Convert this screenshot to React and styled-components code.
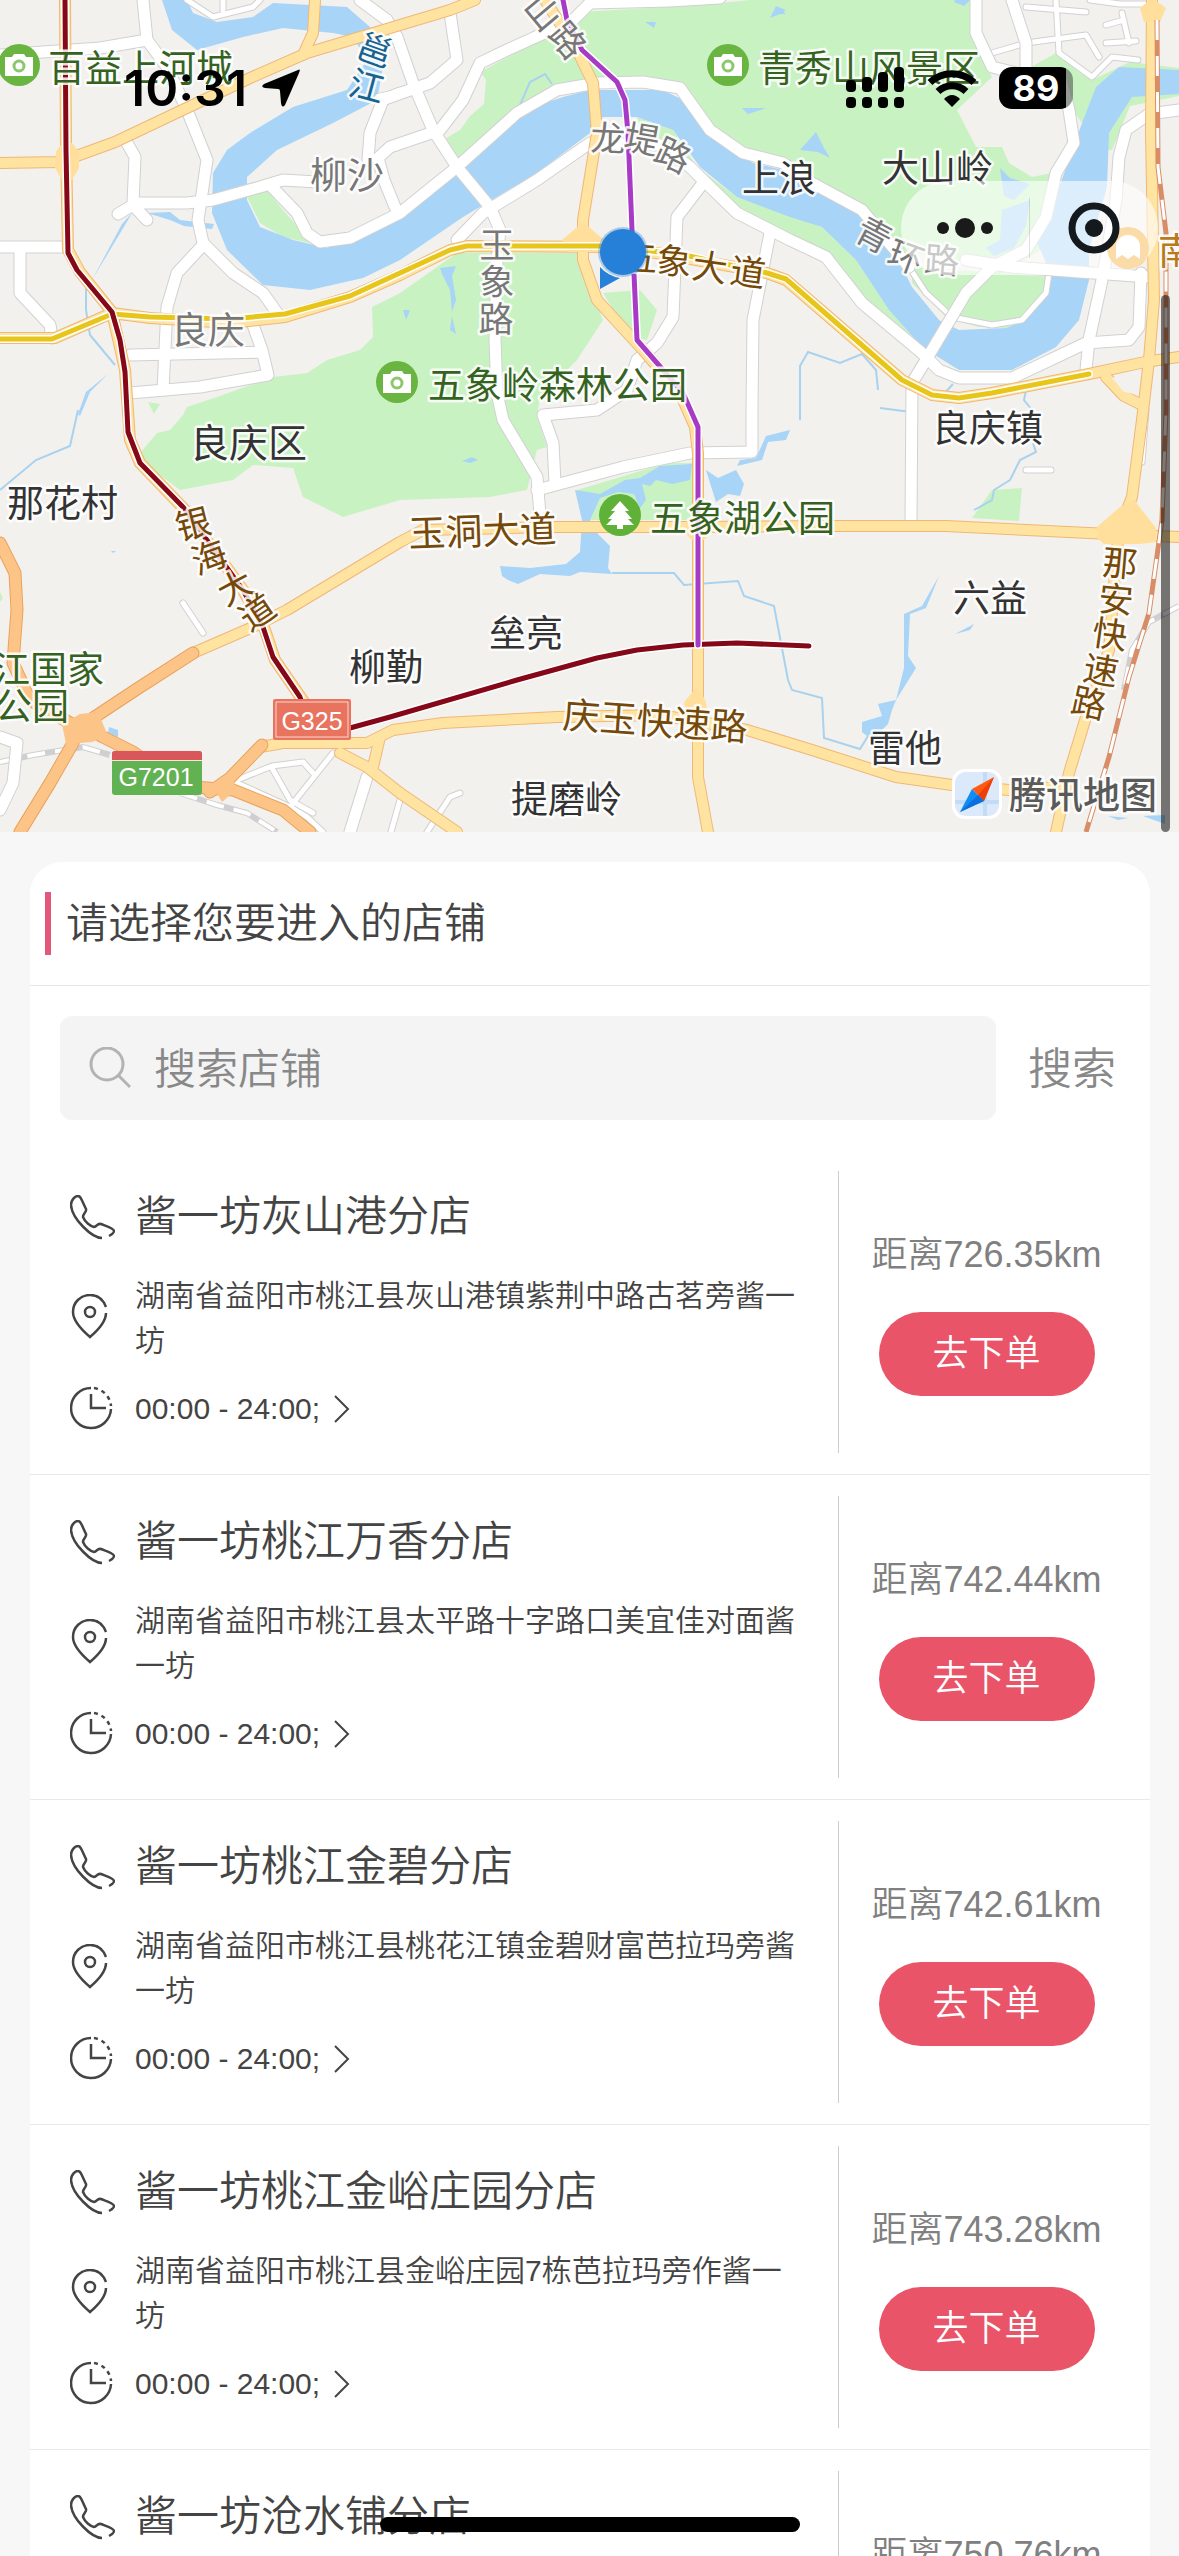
import React, { useState } from 'react';
import styled, { createGlobalStyle } from 'styled-components';

const SANS = '"Liberation Sans", "Noto Sans CJK SC", sans-serif';

const stores = [
  { name: '酱一坊灰山港分店', address: '湖南省益阳市桃江县灰山港镇紫荆中路古茗旁酱一坊', hours: '00:00 - 24:00;', distance: '726.35' },
  { name: '酱一坊桃江万香分店', address: '湖南省益阳市桃江县太平路十字路口美宜佳对面酱一坊', hours: '00:00 - 24:00;', distance: '742.44' },
  { name: '酱一坊桃江金碧分店', address: '湖南省益阳市桃江县桃花江镇金碧财富芭拉玛旁酱一坊', hours: '00:00 - 24:00;', distance: '742.61' },
  { name: '酱一坊桃江金峪庄园分店', address: '湖南省益阳市桃江县金峪庄园7栋芭拉玛旁作酱一坊', hours: '00:00 - 24:00;', distance: '743.28' },
  { name: '酱一坊沧水铺分店', address: '湖南省益阳市赫山区沧水铺镇沧水铺社区芭拉玛旁酱一坊', hours: '00:00 - 24:00;', distance: '750.76' },
];

/* ---------- map data ---------- */

const parks = [
  'M580 12 700 5 750 0 970 0 975 45 992 77 957 110 976 147 1002 147 1009 163 1032 177 1052 173 1040 250 1000 275 960 262 900 250 866 213 812 183 783 163 723 137 683 90 590 80 583 50 547 33Z',
  'M547 33 583 50 590 80 550 87 500 120 457 160 443 140 460 130 470 116 484 104 486 80 480 72 510 56Z',
  'M912 267 1052 277 1049 293 1026 320 1006 328 979 327 946 317 912 283Z',
  'M637 117 673 130 697 167 737 197 790 215 822 227 856 260 889 310 922 347 862 300 822 257 779 230 737 207 690 170 640 130Z',
  'M1026 70 1056 53 1079 72 1092 80 1130 62 1179 68 1179 96 1130 106 1112 150 1106 150 1108 128 1120 100 1082 123 1074 112 1064 84 1026 80Z',
  'M400 293 372 307 373 337 360 350 327 360 307 373 273 377 217 397 187 407 183 415 170 430 157 433 140 453 153 470 180 490 233 480 253 465 293 468 303 497 343 517 400 500 490 497 527 490 537 450 547 447 537 417 540 397 577 360 603 320 590 290 577 253 457 253Z',
  'M603 293 640 290 657 310 647 340 630 337Z',
  'M247 197 267 190 283 210 307 237 327 247 283 237 260 223Z',
  'M577 490 667 463 692 463 693 520 590 520Z',
  'M992 490 1022 488 1019 521 972 518Z',
  'M148 402 160 404 154 414Z',
  'M0 592 3 598 0 602Z',
];

const waters = [
  'M162 0 172 30 197 50 243 37 283 28 333 33 353 37 367 60 347 90 293 107 250 133 227 150 213 173 212 213 227 250 263 285 310 290 363 278 400 260 463 217 537 173 590 133 603 117 637 117 673 130 700 167 737 197 790 217 822 227 856 260 889 310 922 347 959 370 1012 370 1056 347 1079 320 1089 280 1089 250 1107 187 1109 133 1132 97 1179 94 1179 70 1119 67 1096 87 1082 123 1069 160 1059 187 1036 240 1052 277 1049 293 1026 320 1006 328 959 330 939 320 912 287 892 247 859 213 812 187 783 170 753 163 723 143 683 100 663 90 590 90 563 97 533 107 463 167 453 177 390 223 360 233 327 248 293 240 260 227 247 200 247 177 277 150 333 123 377 100 383 67 370 27 347 7 273 3 253 17 217 22 193 13 187 0Z',
  'M575 490 600 494 625 480 640 478 660 466 692 464 690 480 672 484 656 480 650 486 642 484 646 500 640 508 634 494 618 492 600 498 590 520 598 534 610 546 608 568 612 574 580 572 570 576 540 574 518 584 508 580 502 576 500 566 530 568 566 564 580 552 582 520Z',
  'M706 470 718 478 736 470 744 484 740 496 728 494 716 502Z',
  'M737 466 762 460 768 442 786 440 790 430 766 436 756 458 740 460Z',
  'M939 576 922 606 904 614 904 668 896 700 916 668 908 656 910 614 926 608Z',
  'M896 700 878 704 882 716 862 722 862 732 872 740 888 724 892 710Z',
  'M955 634 974 624 970 630Z',
  'M109 727 118 730 118 737 108 733Z',
  'M132 213 128 220 92 280 122 224Z',
  'M147 213 170 212 180 220 214 224 212 229 184 226 170 220Z',
  'M90 335 104 350 98 346Z M108 374 90 392 80 416 78 414 86 392Z',
  'M1002 210 1030 200 1026 226 1014 248 994 256 986 248 1000 240Z',
  'M1000 168 1010 178 1030 184 1014 200 1004 196Z',
  'M1143 816 1165 815 1165 824Z M1108 816 1128 818 1118 820Z',
  'M440 268 456 266 452 276 456 300 452 312 450 290 442 274Z M452 316 456 334 450 330Z M403 310 410 310 406 320Z',
  'M776 6 786 10 780 14 770 18Z M645 22 656 22 654 28Z M742 108 766 108 748 114Z M800 150 816 132 824 148 830 158 818 152Z',
  'M955 0 970 0 964 6 954 2Z M779 8 786 14 780 14Z',
  'M462 461 472 457 478 460 470 463Z M111 551 116 551 113 553Z',
];

const streams = [
  'M78 410 70 446 36 460 0 490',
  'M612 573 674 573 684 585 738 581 744 596 774 606 788 680 792 690 822 698 824 738 860 749 868 736',
  'M800 420 800 366 808 352 840 363 862 354 876 370 878 390',
  'M880 408 911 412 M1033 443 1036 452 1020 460 1010 480 994 490 992 500 974 510',
  'M943 395 953 384 M1026 390 1024 400 1032 410',
  'M505 120 520 105 530 82 545 74 552 84',
  'M86 280 86 310 90 335 115 365',
];

const streets = [
  'M143 0 147 40 167 67 187 110 207 160 203 187 198 220 203 243 233 273 263 293 280 317',
  'M0 55 100 48 147 40',
  'M203 245 177 273 167 307 163 390',
  'M127 143 135 157 133 203 187 203 213 200 260 187 283 180 317 182',
  'M118 214 133 205 147 220',
  'M0 247 66 247 M20 247 20 293 50 325 52 338',
  'M130 355 262 352 M253 325 262 350 268 375 200 387 130 393',
  'M272 187 297 213 307 233 320 242 350 238 400 213 457 167 517 113 557 90 597 83 643 82 680 88 710 130 743 153 783 163 812 183 862 210 909 267',
  'M397 37 413 83 433 130 457 167 490 207 500 230 497 260 495 340 497 393 503 420 537 477 540 515',
  'M457 240 483 213 537 180 590 143 660 145 690 167 703 180 737 213 790 240 826 257 862 303 922 353 939 370 959 378 1012 378 1086 343 1129 340 1139 327 1141 273',
  'M911 523 912 383 926 360 966 293 992 267 1026 250 1046 217 1056 173 1074 143 1069 110 1062 83 1020 74 992 67 976 33 976 0',
  'M1102 280 1089 340 1086 370',
  'M966 260 1012 267 1079 272 1149 277',
  'M1179 110 1149 114 1126 130 1119 157 1116 200 1104 270',
  'M1012 0 1026 43 1026 67',
  'M450 13 457 60 430 83 390 97 380 99',
  'M573 20 507 50 480 63 463 100 440 130 390 147 378 158 384 180 395 207',
  'M573 20 590 3 670 1 720 -2',
  'M368 160 370 133 383 100 400 93',
  'M703 183 677 217 673 317 657 343 637 360 627 390 597 410 543 415 553 443 555 483',
  'M537 490 563 483 623 467 690 453 752 452 752 410 753 320 770 233',
  'M360 0 387 20 397 37',
  'M0 737 17 743 13 783 0 810',
  'M367 777 350 832',
];

const lanes = [
  'M909 267 926 293 952 317 992 325 1022 320 1046 293 1049 273',
  'M1056 0 1059 53 1092 77 1112 57 1138 60',
  'M992 53 1026 43 1086 35 1099 57',
  'M1026 7 1086 12 M1122 13 1129 43 M1106 25 1124 20 M1106 43 1136 41',
  'M1090 0 1120 4 1149 4',
  'M187 0 213 17 253 7 260 0 M223 0 223 10',
  'M237 780 272 766 303 762 313 773 M333 753 290 807 M272 768 290 800 313 813',
  'M237 783 290 807 307 817 323 832',
  'M400 800 391 832 M460 793 450 797 427 832',
  'M183 603 203 633 M1026 470 1051 470',
  'M1146 410 1142 462',
];

const mainRoads = [
  'M0 163 60 162 115 142 250 78 307 53 400 25 450 10 475 0',
  'M65 0 66 150 68 250 80 272 112 312 125 370 130 440 140 463 185 510 243 590 265 630 275 660 304 702',
  'M315 0 313 33 303 55',
  'M0 338 55 338 112 313 150 318 230 323 285 317 350 297 400 275 450 250 467 246 620 247 680 257 767 273 786 280 902 380 932 395 959 398 992 393 1089 374 1145 362 1179 357',
  'M545 0 577 50 593 83 597 133 583 220 583 260 597 300 643 350 680 393 695 427 698 453 698 777 708 832',
  'M193 653 253 627 287 610 400 542 423 530 557 527 698 527 832 526 946 526 1089 533 1179 537',
  'M260 747 283 743 367 743 393 730 443 723 557 717 660 715 747 730 812 750 896 777 952 785 1009 790 1060 787',
  'M340 753 367 767 400 793 457 832 M373 767 380 737',
  'M1152 0 1151 133 1154 300 1149 360 1142 420 1132 497 1119 530 1116 560 1109 650 1086 717 1069 773 1056 832',
  'M1106 377 1124 396 1140 404',
];

const expressways = [
  'M0 543 15 573 17 610 13 663 30 700 77 727 73 743 50 783 20 832',
  'M84 724 140 687 193 653',
  'M80 724 103 737 133 752 180 786 233 790 283 810 310 832',
  'M210 792 230 778 262 745',
];

const junctions = [
  'M56 152 62 143 72 143 79 152 79 168 72 180 62 180 55 168Z',
  'M80 714 98 712 108 736 92 742 66 744 62 724Z',
  'M214 788 232 774 236 790 222 802Z',
  'M1097 527 1120 507 1134 500 1156 528 1156 542 1140 544 1104 544 1097 538Z',
  'M1140 8 1152 -2 1166 8 1160 22 1144 22Z',
  'M562 240 583 222 604 240 598 252 568 252Z',
  'M684 702 698 686 706 702 710 732 698 748 688 730Z',
  'M688 518 708 518 712 532 704 540 692 540 684 532Z',
];

const labels = [
  { t: '百益上河城', x: 48, y: 82, c: '#35631f' },
  { t: '青秀山风景区', x: 758, y: 82, c: '#35631f' },
  { t: '五象岭森林公园', x: 428, y: 399, c: '#35631f' },
  { t: '五象湖公园', x: 650, y: 532, c: '#35631f' },
  { t: '江国家', x: -7, y: 683, c: '#35631f' },
  { t: '公园', x: -5, y: 720, c: '#35631f' },
  { t: '柳沙', x: 310, y: 189, c: '#777' },
  { t: '良庆', x: 171, y: 344, c: '#777' },
  { t: '上浪', x: 742, y: 192, c: '#333' },
  { t: '大山岭', x: 882, y: 182, c: '#333' },
  { t: '良庆区', x: 190, y: 457, c: '#333', s: 39 },
  { t: '那花村', x: 7, y: 517, c: '#333' },
  { t: '良庆镇', x: 932, y: 442, c: '#333' },
  { t: '六益', x: 953, y: 612, c: '#333' },
  { t: '雷他', x: 868, y: 762, c: '#333' },
  { t: '垒亮', x: 489, y: 647, c: '#333' },
  { t: '柳勤', x: 349, y: 681, c: '#333' },
  { t: '提磨岭', x: 511, y: 813, c: '#333' },
  { t: '玉洞大道', x: 409, y: 547, c: '#74490a', r: -2 },
  { t: '庆玉快速路', x: 562, y: 728, c: '#74490a', r: 4 },
  { t: '南', x: 1158, y: 265, c: '#b97a1c' },
];

// road names that bend along the street, one centre point and angle per character
const roadNames = [
  { c: '#17628f', chars: [['邕', 375, 50, 20], ['江', 367, 86, 15]] },
  { c: '#777', chars: [['山', 543, 12, 50], ['路', 568, 40, 50]] },
  { c: '#777', chars: [['龙', 608, 138, 2], ['堤', 642, 139, 10], ['路', 673, 155, 25]] },
  { c: '#777', chars: [['玉', 497, 245, 0], ['象', 497, 282, 0], ['路', 496, 319, 0]] },
  { c: '#74490a', chars: [['五', 640, 258, 3], ['象', 674, 261, 5], ['大', 710, 267, 8], ['道', 748, 272, 8]] },
  { c: '#777', chars: [['青', 874, 235, 28], ['环', 906, 257, 20], ['路', 942, 260, 4]] },
  { c: '#74490a', chars: [['银', 193, 524, -14], ['海', 209, 557, -20], ['大', 235, 587, -28], ['道', 257, 612, -34]] },
  { c: '#74490a', chars: [['那', 1120, 563, 5], ['安', 1116, 599, 5], ['快', 1110, 634, 8], ['速', 1101, 670, 10], ['路', 1089, 703, 12]] },
];

function Roads({ paths, casing, fill, width }) {
  return (
    <g fill="none" strokeLinejoin="round" strokeLinecap="round">
      {paths.map((d) => <path key={d} d={d} stroke={casing} strokeWidth={width + 2} />)}
      {paths.map((d) => <path key={d + 'f'} d={d} stroke={fill} strokeWidth={width} />)}
    </g>
  );
}

function CameraSpot({ x, y }) {
  return (
    <g transform={`translate(${x} ${y})`}>
      <circle r="21" fill="#6ab441" />
      <path d="M-14 -8H-7L-5 -11H5L7 -8H14V11H-14Z" fill="#fff" />
      <circle cy="1" r="5" fill="none" stroke="#8cc76c" strokeWidth="3" />
    </g>
  );
}

function StoreMap() {
  return (
    <MapSvg viewBox="0 0 1179 832" role="img" aria-label="腾讯地图">
      <rect width="1179" height="832" fill="#f2f1ee" />
      {parks.map((d) => <path key={d} d={d} fill="#c9f2c3" />)}
      {waters.map((d) => <path key={d} d={d} fill="#a7d4f7" />)}
      <g fill="none" stroke="#a9d2ee" strokeWidth="2">
        {streams.map((d) => <path key={d} d={d} />)}
      </g>

      <g fill="none">
        <path d="M0 762 33 755 83 747 110 755 M180 793 217 805 247 813 277 832 M1179 606 1149 622 1132 650 1124 690" stroke="#cfcfd2" strokeWidth="6" />
        <path d="M0 762 33 755 83 747 110 755 M180 793 217 805 247 813 277 832 M1179 606 1149 622 1132 650 1124 690" stroke="#fff" strokeWidth="4" strokeDasharray="18 10" />
      </g>
      <Roads paths={lanes} casing="#d2d1d2" fill="#fff" width={5} />
      <Roads paths={streets} casing="#d2d1d2" fill="#fff" width={11} />
      <Roads paths={mainRoads} casing="#f0b777" fill="#ffe3a0" width={10} />
      <Roads paths={expressways} casing="#eaa25c" fill="#fdc487" width={11} />
      {junctions.map((d, i) => <path key={d} d={d} fill={i === 1 || i === 2 ? '#fdc487' : '#ffdf9b'} />)}
      <path d="M1112 378 1140 370 1134 394 1124 392Z" fill="#f2f1ee" />

      <g fill="none">
        <path d="M1157 20 1158 167 1166 233 1166 410 1162 520 1149 613 1129 677 1109 757 1086 832" stroke="#d98d66" strokeWidth="5" />
        <path d="M1157 20 1158 167 1166 233 1166 410 1162 520 1149 613 1129 677 1109 757 1086 832" stroke="#fff" strokeWidth="3" strokeDasharray="20 16" />
      </g>

      {/* metro lines */}
      <g fill="none" strokeLinejoin="round" strokeLinecap="round">
        <path d="M0 339 52 339 112 314 150 317 230 319 285 314 350 296 400 273 450 250 467 246 600 246 680 254 767 273 786 279 902 380 932 395 959 398 992 393 1089 374" stroke="#fff" strokeWidth="8" />
        <path d="M0 339 52 339 112 314 150 317 230 319 285 314 350 296 400 273 450 250 467 246 600 246 680 254 767 273 786 279 902 380 932 395 959 398 992 393 1089 374" stroke="#e8c51a" strokeWidth="5" />
        <path d="M65 0 66 150 68 253 77 270 112 312 120 340 125 372 128 432 140 463 183 507 243 590 263 627 273 657 300 697 313 733 350 728 390 717 517 680 597 658 637 650 683 645 737 643 809 646" stroke="#fff" strokeWidth="8" />
        <path d="M65 0 66 150 68 253 77 270 112 312 120 340 125 372 128 432 140 463 183 507 243 590 263 627 273 657 300 697 313 733 350 728 390 717 517 680 597 658 637 650 683 645 737 643 809 646" stroke="#850818" strokeWidth="5" />
        <path d="M563 0 567 20 582 50 617 82 625 100 628 133 632 230 637 340 683 393 698 427 698 645" stroke="#fff" strokeWidth="8" />
        <path d="M563 0 567 20 582 50 617 82 625 100 628 133 632 230 637 340 683 393 698 427 698 645" stroke="#a73bc6" strokeWidth="5" />
      </g>

      <CameraSpot x={19} y={65} />
      <CameraSpot x={728} y={65} />
      <CameraSpot x={397} y={382} />
      <g transform="translate(620 515)">
        <circle r="21" fill="#5fb138" />
        <path d="M0 -14 9 -4H5L12 4H8L14 10H3V14H-3V10H-14L-8 4H-12L-5 -4H-9Z" fill="#fff" />
      </g>
      <g transform="translate(1128 248)">
        <circle r="21" fill="#f5a623" />
        <path d="M-12 11V-2A12 11 0 0 1 12 -2V11L6 7 0 11 -6 7Z" fill="#fff" />
      </g>

      {labels.map((l) => (
        <MapText key={l.t} x={l.x} y={l.y} fill={l.c} fontSize={l.s || 37} transform={l.r ? `rotate(${l.r} ${l.x} ${l.y})` : undefined}>{l.t}</MapText>
      ))}
      {roadNames.map((n) => n.chars.map(([ch, x, y, r]) => (
        <MapText key={ch + x} x={x} y={y + 13} fill={n.c} fontSize="35" textAnchor="middle" transform={`rotate(${r} ${x} ${y})`}>{ch}</MapText>
      )))}

      <rect x="273" y="699" width="78" height="41" rx="2" fill="#e8735f" />
      <rect x="276" y="702" width="72" height="35" fill="none" stroke="#f8d9d0" />
      <ShieldText x="312" y="730" textAnchor="middle">G325</ShieldText>
      <rect x="112" y="751" width="90" height="44" rx="3" fill="#62b153" />
      <path d="M112 760V754Q112 751 115 751H199Q202 751 202 754V760Z" fill="#d9565a" />
      <path d="M112 760.5H202" stroke="#f0e6dc" />
      <ShieldText x="156" y="786" textAnchor="middle">G7201</ShieldText>

      <rect x="952" y="769" width="50" height="50" rx="13" fill="#fff" />
      <rect x="955" y="772" width="44" height="44" rx="11" fill="#dce9fb" />
      <path d="M955 802H999M985 772V816" stroke="#c3dcf6" strokeWidth="4" />
      <path d="M994 777 972 789 984 801Z" fill="#ff5a12" />
      <path d="M994 777 984 801 978 795Z" fill="#ee3f0a" />
      <path d="M960 812 972 789 984 801Z" fill="#0f8df5" />
      <path d="M960 812 978 795 984 801Z" fill="#0b6fdd" />
      <BrandText x="1009" y="809">腾讯地图</BrandText>

      <g fill="#2680d8">
        <circle cx="623" cy="252" r="25" opacity="0.35" />
        <circle cx="623" cy="252" r="23" />
        <path d="M600 267V289L620 278Q608 276 600 267Z" />
      </g>
    </MapSvg>
  );
}

/* ---------- icons ---------- */

function PhoneIcon() {
  return (
    <LineIcon viewBox="0 0 45 45" strokeWidth="2.5">
      <path d="M32 43C22 43 2 24 1 10C1 5 5 1 8 1C11 1 12 6 16 14C17 17 13 18 13 22C15 27 20 31 24 32C27 32 27 28 31 29C36 31 44 33 44 36C44 38 41 40 39 41" />
    </LineIcon>
  );
}

function PinIcon() {
  return (
    <LineIcon viewBox="0 0 45 45" strokeWidth="2.5">
      <path d="M36 13C33 5 27 1 20 1C11 1 3 8 3 18C3 27 13 37 20 43C27 37 36 28 36 19" />
      <circle cx="20" cy="18" r="5" />
    </LineIcon>
  );
}

function ClockIcon() {
  return (
    <LineIcon viewBox="0 0 45 45" strokeWidth="2.5">
      <path d="M21 2A20 20 0 1 0 41 23" />
      <path d="M24 2A20 20 0 0 1 41 20" strokeDasharray="4 4" />
      <path d="M21 8V22H36" />
    </LineIcon>
  );
}

function StatusBar() {
  return (
    <Status>
      <StatusGroup>
        <Clock>10:31</Clock>
        <svg width="40" height="40" viewBox="0 0 40 40">
          <path d="M37 2Q40 0 38 5L24 37Q21 41 20 35L19 23Q19 21 17 21L4 20Q-1 19 3 16Z" />
        </svg>
      </StatusGroup>
      <StatusGroup>
        <svg width="59" height="42" viewBox="0 0 59 42">
          <rect x="0" y="13" width="10" height="12" rx="4" />
          <rect x="16" y="10" width="10" height="15" rx="4" />
          <rect x="32" y="5" width="10" height="20" rx="4" />
          <rect x="48" y="0" width="10" height="25" rx="4" />
          <rect x="0" y="30" width="10" height="11" rx="4" />
          <rect x="16" y="30" width="10" height="11" rx="4" />
          <rect x="32" y="30" width="10" height="11" rx="4" />
          <rect x="48" y="30" width="10" height="11" rx="4" />
        </svg>
        <svg width="50" height="38" viewBox="0 0 50 38">
          <path d="M3 13.500A32 32 0 0 1 47 13.500" fill="none" stroke="#000" strokeWidth="7" />
          <path d="M11 22.500A20 20 0 0 1 39 22.500" fill="none" stroke="#000" strokeWidth="7" />
          <path d="M17 30Q25 22 33 30L25 38Z" />
        </svg>
        <Battery>89</Battery>
      </StatusGroup>
    </Status>
  );
}

function StoreRow({ store }) {
  return (
    <Row>
      <Info>
        <Line>
          <PhoneIcon />
          <StoreName>{store.name}</StoreName>
        </Line>
        <Line>
          <PinIcon />
          <Address>{store.address}</Address>
        </Line>
        <Line>
          <ClockIcon />
          <Hours>
            {store.hours}
            <svg width="16" height="28" viewBox="0 0 16 28" fill="none" stroke="#444" strokeWidth="2">
              <path d="M1 1 14 14 1 27" />
            </svg>
          </Hours>
        </Line>
      </Info>
      <Action>
        <Distance>距离{store.distance}km</Distance>
        <OrderButton type="button">去下单</OrderButton>
      </Action>
    </Row>
  );
}

function App() {
  const [query, setQuery] = useState('');
  const [keyword, setKeyword] = useState('');

  const handleSubmit = (e) => {
    e.preventDefault();
    setKeyword(query.trim());
  };

  return (
    <>
      <GlobalStyle />
      <Screen>
        <MapArea>
          <StoreMap />
          <StatusBar />
          <Capsule>
            <CapsuleButton type="button" aria-label="更多">
              <svg width="58" height="24" viewBox="0 0 58 24" fill="#1a1a1a">
                <circle cx="7" cy="12" r="6" />
                <circle cx="29" cy="12" r="10" />
                <circle cx="51" cy="12" r="6" />
              </svg>
            </CapsuleButton>
            <CapsuleButton type="button" aria-label="关闭">
              <svg width="52" height="52" viewBox="0 0 52 52">
                <circle cx="26" cy="26" r="22" fill="none" stroke="#14191e" strokeWidth="7" />
                <circle cx="26" cy="26" r="9" fill="#14191e" />
              </svg>
            </CapsuleButton>
          </Capsule>
          <ScrollThumb />
        </MapArea>
        <Card>
          <CardHeader>
            <h1>请选择您要进入的店铺</h1>
          </CardHeader>
          <SearchForm onSubmit={handleSubmit}>
            <SearchBox>
              <svg width="42" height="42" viewBox="0 0 42 42" fill="none" stroke="#b3b3b3" strokeWidth="3">
                <circle cx="18" cy="17" r="16" />
                <path d="M30 29 41 40" />
              </svg>
              <input type="text" aria-label="搜索店铺" placeholder="搜索店铺" value={query} onChange={(e) => setQuery(e.target.value)} />
            </SearchBox>
            <SearchButton type="submit">搜索</SearchButton>
          </SearchForm>
          <List>
            {stores.filter((s) => s.name.includes(keyword)).map((s) => <StoreRow key={s.name} store={s} />)}
          </List>
        </Card>
        <HomeIndicator />
      </Screen>
    </>
  );
}

const GlobalStyle = createGlobalStyle`
  * {
    box-sizing: border-box;
  }
  body {
    margin: 0;
    background: #f7f7f7;
    font-family: ${SANS};
    font-weight: 350;
    color: #444;
  }
  button, input {
    font: inherit;
    border: none;
    background: none;
    padding: 0;
  }
`;

const Screen = styled.div`
  height: 100vh;
  overflow-y: auto;
  scrollbar-width: none;
`;

const MapArea = styled.section`
  position: relative;
`;

const MapSvg = styled.svg`
  display: block;
  width: 100%;
  height: auto;
`;

const MapText = styled.text`
  font-family: "Noto Sans CJK SC", sans-serif;
  font-weight: 400;
  paint-order: stroke;
  stroke: #fff;
  stroke-opacity: 0.85;
  stroke-width: 5px;
  stroke-linejoin: round;
`;

const BrandText = styled(MapText)`
  font-size: 37px;
  font-weight: 500;
  fill: #5a5a5a;
`;

const ShieldText = styled.text`
  font-family: "Liberation Sans", sans-serif;
  font-size: 25px;
  font-weight: 400;
  fill: #fff;
`;

const Status = styled.header`
  position: absolute;
  top: 64px;
  left: 124px;
  right: 106px;
  height: 48px;
  display: flex;
  align-items: center;
  justify-content: space-between;
`;

const StatusGroup = styled.div`
  display: flex;
  align-items: center;
  gap: 22px;
  &:first-child {
    gap: 14px;
  }
`;

const Clock = styled.span`
  font-family: Inter, sans-serif;
  font-size: 50px;
  line-height: 48px;
  font-weight: 600;
  color: #000;
`;

const Battery = styled.span`
  width: 74px;
  height: 42px;
  border-radius: 13px;
  background: linear-gradient(to right, #000 90%, rgba(90, 100, 90, 0.65) 90%);
  color: #fff;
  font-family: Inter, sans-serif;
  font-size: 36px;
  line-height: 42px;
  font-weight: 700;
  text-align: center;
`;

const Capsule = styled.div`
  position: absolute;
  top: 181px;
  right: 21px;
  width: 257px;
  height: 94px;
  border-radius: 47px;
  background: rgba(255, 255, 255, 0.6);
  display: flex;
  align-items: center;
`;

const CapsuleButton = styled.button`
  flex: 1;
  height: 60px;
  display: flex;
  align-items: center;
  justify-content: center;
  & + & {
    border-left: 1px solid rgba(0, 0, 0, 0.12);
  }
`;

const ScrollThumb = styled.div`
  position: absolute;
  top: 295px;
  right: 9px;
  bottom: 0;
  width: 9px;
  border-radius: 5px;
  background: rgba(0, 0, 0, 0.52);
`;

const Card = styled.main`
  margin: 30px 29px 0 30px;
  border-radius: 32px 32px 0 0;
  background: #fff;
`;

const CardHeader = styled.div`
  padding: 30px 15px;
  border-bottom: 1px solid #e6e6e6;
  h1 {
    margin: 0;
    padding-left: 15px;
    border-left: 6px solid #e4577a;
    font-size: 42px;
    line-height: 63px;
    font-weight: 350;
  }
`;

const SearchForm = styled.form`
  display: flex;
  align-items: center;
  padding: 30px 34px 30px 30px;
`;

const SearchBox = styled.label`
  flex: 1;
  display: flex;
  align-items: center;
  gap: 23px;
  height: 104px;
  padding: 0 29px;
  border-radius: 12px;
  background: #f4f4f4;
  input {
    flex: 1;
    min-width: 0;
    padding-top: 3px;
    font-size: 42px;
    line-height: 60px;
    outline: none;
  }
  input::placeholder {
    color: #888;
    opacity: 1;
  }
`;

const SearchButton = styled.button`
  margin-left: 32px;
  padding-top: 3px;
  font-size: 44px;
  line-height: 60px;
  color: #888;
`;

const List = styled.ul`
  margin: 0;
  padding: 0;
  list-style: none;
`;

const Row = styled.li`
  display: flex;
  padding: 21px 0;
  border-bottom: 1px solid #e9e9e9;
`;

const Info = styled.div`
  flex: 1;
  display: flex;
  flex-direction: column;
  gap: 23px;
  padding: 16px 40px 22px;
`;

const Line = styled.div`
  display: flex;
  align-items: center;
  gap: 20px;
`;

const LineIcon = styled.svg`
  flex: none;
  width: 45px;
  height: 45px;
  fill: none;
  stroke: #444;
`;

const StoreName = styled.h2`
  margin: 0;
  font-size: 42px;
  line-height: 60px;
  font-weight: 350;
`;

const Address = styled.p`
  margin: 0;
  padding-top: 3px;
  font-size: 30px;
  line-height: 45px;
`;

const Hours = styled.div`
  display: flex;
  align-items: center;
  gap: 14px;
  font-size: 30px;
  line-height: 45px;
`;

const Action = styled.div`
  width: 312px;
  padding-right: 16px;
  display: flex;
  flex-direction: column;
  align-items: center;
  justify-content: center;
  gap: 30px;
  border-left: 1px solid #ccc;
`;

const Distance = styled.span`
  font-size: 36px;
  line-height: 54px;
  color: #808080;
`;

const OrderButton = styled.button`
  width: 216px;
  height: 84px;
  border-radius: 42px;
  background: #ea5468;
  color: #fff;
  font-size: 36px;
  line-height: 54px;
`;

const HomeIndicator = styled.div`
  position: fixed;
  bottom: 24px;
  left: 50%;
  width: 420px;
  height: 15px;
  transform: translateX(-50%);
  border-radius: 8px;
  background: #000;
`;

export default App;
